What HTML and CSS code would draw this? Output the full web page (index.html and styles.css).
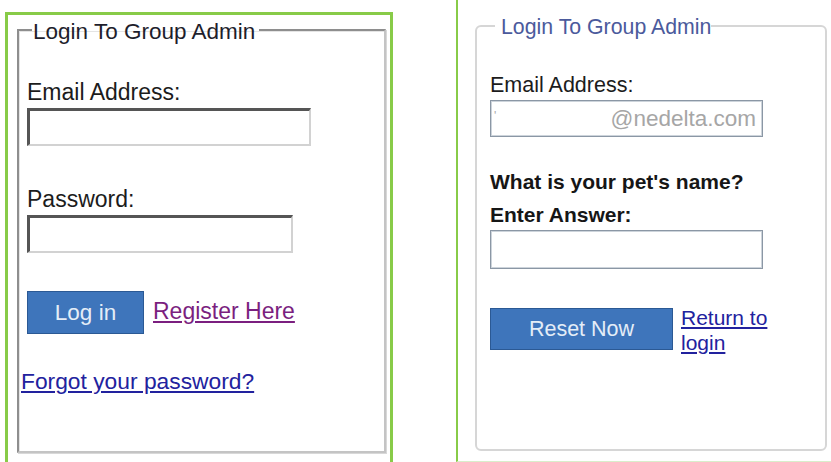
FILE: index.html
```html
<!DOCTYPE html>
<html lang="en">
<head>
<meta charset="utf-8">
<title>Login To Group Admin</title>
<link rel="stylesheet" href="styles.css">
</head>
<body>
  <div class="panel panel-login">
    <fieldset class="box box-classic">
      <legend>Login To Group Admin</legend>
      <label class="lbl lbl-first" for="email">Email Address:</label>
      <input class="inp inp-email" id="email" type="text">
      <label class="lbl lbl-next" for="pass">Password:</label>
      <input class="inp inp-pass" id="pass" type="password">
      <div class="actions">
        <button class="btn btn-login" type="button">Log in</button>
        <a class="link link-visited" href="#">Register Here</a>
      </div>
      <a class="link link-forgot" href="#">Forgot your password?</a>
    </fieldset>
  </div>

  <div class="panel panel-reset">
    <fieldset class="box box-soft">
      <legend>Login To Group Admin</legend>
      <label class="lbl2 lbl2-first">Email Address:</label>
      <div class="field field-email" role="textbox">
        <span class="field-tick">'</span>
        <span class="field-domain">@nedelta.com</span>
      </div>
      <div class="question">What is your pet's name?</div>
      <label class="answer-label" for="answer">Enter Answer:</label>
      <input class="field field-answer" id="answer" type="text">
      <div class="actions2">
        <button class="btn btn-reset" type="button">Reset Now</button>
        <a class="link link-return" href="#">Return to login</a>
      </div>
    </fieldset>
  </div>
</body>
</html>
```

FILE: styles.css
```css
* {
  box-sizing: border-box;
}

html, body {
  margin: 0;
  padding: 0;
  background: #ffffff;
}

body {
  width: 831px;
  height: 462px;
  overflow: hidden;
  display: flex;
  align-items: flex-start;
  font-family: "Liberation Sans", Arial, sans-serif;
  color: #1c1c1c;
}

/* ---------- left: classic login box ---------- */

.panel-login {
  margin-left: 5px;
  margin-top: 12px;
  width: 388px;
  height: 470px;
  border: 3px solid #88cb48;
  border-bottom: none;
  padding-left: 9px;
}

.box {
  margin: 0;
  padding: 0;
  min-width: 0;
}

.box-classic {
  width: 369px;
  height: 438px;
  border: 2px solid #9a9a9a;
  border-color: #8e8e8e #c4c4c4 #c4c4c4 #8e8e8e;
  box-shadow: inset 1px 1px 0 #e4e4e4, 1px 1px 0 #d8d8d8;
  padding-left: 8px;
}

.box-classic legend {
  font-size: 22.5px;
  line-height: 24px;
  padding: 5px 4px 0 1px;
  margin-left: 5px;
  color: #1e1e2c;
}

.lbl {
  display: block;
  font-size: 23px;
  line-height: 25px;
  color: #1c1c1c;
}

.lbl-first {
  margin-top: 36px;
}

.lbl-next {
  margin-top: 41px;
}

.inp {
  display: block;
  margin-top: 3px;
  height: 38px;
  border-style: solid;
  border-width: 3px 2px 2px 3px;
  border-color: #555555 #d2d2d2 #d2d2d2 #555555;
  background: #ffffff;
  outline: none;
  padding: 0 4px;
  font-size: 20px;
  font-family: inherit;
}

.inp-email {
  width: 284px;
}

.inp-pass {
  width: 266px;
}

.actions {
  display: flex;
  align-items: center;
  margin-top: 38px;
  height: 43px;
}

.btn {
  font-family: "Liberation Sans", Arial, sans-serif;
  background: #3e75bb;
  border: 1px solid #2b5994;
  color: #e4edf7;
  padding: 0;
  cursor: pointer;
}

.btn-login {
  width: 117px;
  height: 43px;
  font-size: 22.5px;
}

.link {
  text-decoration: underline;
  text-underline-offset: 2px;
}

.link-visited {
  margin-left: 9px;
  font-size: 23px;
  line-height: 25px;
  color: #7b1f7f;
  padding-bottom: 2px;
}

.link-forgot {
  display: inline-block;
  margin-top: 35px;
  margin-left: -6px;
  font-size: 22.8px;
  line-height: 25px;
  color: #22229e;
}

/* ---------- right: password reset box ---------- */

.panel-reset {
  margin-left: 63px;
  width: 375px;
  height: 462px;
  border-left: 2px solid #88cb48;
  border-bottom: 1px solid #d9eecb;
  padding-left: 17px;
}

.box-soft {
  margin-top: 13px;
  width: 352px;
  height: 438px;
  border: 2px solid #d6d6d6;
  border-radius: 6px;
  padding-left: 13px;
}

.box-soft legend {
  font-size: 21.3px;
  line-height: 24px;
  padding: 2px 0 0 6px;
  margin-left: 5px;
  color: #4b5a9c;
}

.lbl2 {
  display: block;
  font-size: 21.5px;
  line-height: 24px;
  color: #1c1c1c;
}

.lbl2-first {
  margin-top: 34px;
}

.field {
  display: flex;
  align-items: center;
  justify-content: space-between;
  width: 273px;
  margin-top: 3px;
  border: 1px solid #8b97a5;
  box-shadow: inset 0 0 0 1px #cdd4db;
  background: #ffffff;
  padding: 0 6px 0 3px;
  font-family: inherit;
  outline: none;
}

.field-email {
  height: 37px;
}

.field-tick {
  font-size: 12px;
  color: #a8a8a8;
  margin-top: -6px;
}

.field-domain {
  font-size: 22.5px;
  color: #a6a6a6;
}

.question {
  margin-top: 33px;
  font-size: 21px;
  line-height: 24px;
  font-weight: bold;
  color: #161616;
}

.answer-label {
  display: block;
  margin-top: 9px;
  font-size: 21px;
  line-height: 24px;
  font-weight: bold;
  color: #161616;
}

.field-answer {
  height: 39px;
  font-size: 20px;
}

.actions2 {
  display: flex;
  align-items: flex-start;
  margin-top: 39px;
}

.btn-reset {
  width: 183px;
  height: 42px;
  font-size: 21.5px;
  flex-shrink: 0;
}

.link-return {
  margin-left: 8px;
  margin-top: -3px;
  width: 95px;
  font-size: 21px;
  line-height: 25px;
  color: #22229e;
}
```
